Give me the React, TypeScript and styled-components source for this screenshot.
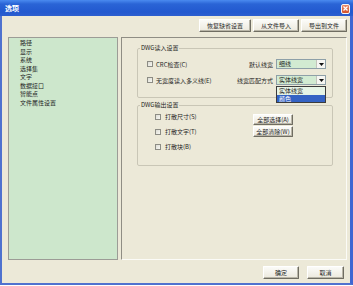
import React from "react";
import styled, { createGlobalStyle } from "styled-components";

const Global = createGlobalStyle`
  html, body { margin: 0; padding: 0; background: #ffffff; }
  body { font-family: "Noto Sans CJK SC", "Noto Sans", sans-serif; }
  * { box-sizing: border-box; }
`;

const Window = styled.div`
  width: 353px;
  height: 285px;
  display: flex;
  flex-direction: column;
  background: #ece9d8;
  border-left: 2px solid #4f72cf;
  border-right: 3px solid #3f66d2;
  border-bottom: 2px solid #4f72cf;
  font-family: "Noto Sans CJK SC", "Noto Sans", sans-serif;
  font-size: 6px;
  color: #1e1e1e;
`;

const TitleBar = styled.div`
  height: 16px;
  margin-left: -2px;
  margin-right: -3px;
  display: flex;
  align-items: center;
  justify-content: space-between;
  padding: 0 3px 0 5px;
  background: linear-gradient(#4a8af0 0%, #2a64d6 25%, #2259cf 75%, #2c5fcf 100%);
`;

const Title = styled.span`
  color: #ffffff;
  font-size: 7px;
  font-weight: bold;
  line-height: 16px;
`;

const CloseBtn = styled.div`
  width: 9px;
  height: 10px;
  margin-top: 1px;
  border: 1px solid #f4f4f4;
  border-radius: 2px;
  background: linear-gradient(#e88a6a, #d2512a);
  display: flex;
  align-items: center;
  justify-content: center;
`;

const Content = styled.div`
  flex: 1;
  display: flex;
  flex-direction: column;
  padding: 3px 3px 4px 6px;
`;

const Toolbar = styled.div`
  display: flex;
  justify-content: flex-end;
  gap: 2px;
  height: 13px;
  margin-bottom: 5px;
`;

const Button = styled.button<{ $w?: number; $h?: number }>`
  font-family: inherit;
  font-size: 6px;
  color: #1e1e1e;
  height: ${(p) => p.$h ?? 13}px;
  width: ${(p) => (p.$w ? `${p.$w}px` : "auto")};
  padding: 0 7px;
  margin: 0;
  line-height: 1;
  background: linear-gradient(#fbfbf8, #ece9dd);
  border: 1px solid;
  border-color: #ffffff #6f6d62 #6f6d62 #ffffff;
  box-shadow: inset -1px -1px 0 #b9b6a8;
  border-radius: 1px;
  display: flex;
  align-items: center;
  justify-content: center;
  white-space: nowrap;
`;

const Main = styled.div`
  flex: 1;
  display: flex;
  gap: 3px;
  min-height: 0;
`;

const ListPanel = styled.div`
  width: 110px;
  background: #cde7cc;
  border: 1px solid #9c9c96;
  padding: 1px 0 0 11px;
`;

const ListItem = styled.div`
  line-height: 8.5px;
  height: 8.5px;
  white-space: nowrap;
`;

const SettingsPanel = styled.div`
  flex: 1;
  border: 1px solid;
  border-color: #8f8d84 #fbfbf7 #fbfbf7 #8f8d84;
  padding: 6px 13px 0 15px;
  display: flex;
  flex-direction: column;
  gap: 3px;
`;

const Group = styled.fieldset`
  margin: 0;
  padding: 0;
  border: 1px solid #c9c6b6;
  border-radius: 2px;
  min-width: 0;
`;

const Legend = styled.legend`
  font-size: 6px;
  line-height: 8px;
  padding: 0 1px;
  margin-left: 2px;
  white-space: nowrap;
`;

const ReadGrid = styled.div`
  display: grid;
  grid-template-columns: 1fr auto 50px;
  grid-auto-rows: 10px;
  row-gap: 6px;
  column-gap: 3px;
  align-items: center;
  padding: 7px 6px 12px 9px;
`;

const CheckRow = styled.label<{ $gap?: number }>`
  display: flex;
  align-items: center;
  gap: ${(p) => p.$gap ?? 3}px;
  white-space: nowrap;
  line-height: 9px;
  height: 9px;
`;

const Box = styled.span`
  width: 6px;
  height: 6px;
  flex: none;
  border: 1px solid #8c8c84;
  background: linear-gradient(135deg, #dcdcd4, #f7f7f2);
`;

const FieldLabel = styled.span`
  justify-self: end;
  white-space: nowrap;
`;

const SelectBox = styled.div`
  position: relative;
  height: 10px;
  width: 50px;
  background: #d2ebd2;
  border: 1px solid #8ea0a8;
  display: flex;
  align-items: center;
  padding-left: 2px;
  white-space: nowrap;
`;

const SelectText = styled.span`
  flex: 1;
  line-height: 8px;
`;

const Arrow = styled.span`
  width: 9px;
  height: 8px;
  background: #f6f6f2;
  border-left: 1px solid #c4c4bc;
  display: flex;
  align-items: center;
  justify-content: center;
`;

const DropList = styled.div`
  position: absolute;
  left: -1px;
  top: 10px;
  width: 50px;
  border: 1px solid #3c3c3c;
  background: #e6f4e6;
  z-index: 2;
`;

const DropItem = styled.div<{ $active?: boolean }>`
  height: 7.5px;
  line-height: 7.5px;
  padding-left: 2px;
  overflow: hidden;
  background: ${(p) => (p.$active ? "#3463c4" : "transparent")};
  color: ${(p) => (p.$active ? "#ffffff" : "#1e1e1e")};
`;

const WriteBody = styled.div`
  display: flex;
  justify-content: space-between;
  padding: 0 39px 14px 17px;
`;

const CheckColumn = styled.div`
  display: flex;
  flex-direction: column;
  gap: 6px;
  padding-top: 3px;
`;

const ButtonColumn = styled.div`
  display: flex;
  flex-direction: column;
  gap: 1px;
  padding-top: 5px;
`;

const Footer = styled.div`
  display: flex;
  justify-content: flex-end;
  gap: 8px;
  margin-top: 6px;
  padding-right: 3px;
`;

const DownTri = () => (
  <svg width="5" height="3" viewBox="0 0 5 3">
    <path d="M0 0 H5 L2.5 3 Z" fill="#111" />
  </svg>
);

const items = ["路径", "显示", "系统", "选择集", "文字", "数据接口", "智能点", "文件属性设置"];

export default function App() {
  return (
    <>
      <Global />
      <Window>
        <TitleBar>
          <Title>选项</Title>
          <CloseBtn>
            <svg width="5" height="5" viewBox="0 0 5 5">
              <path d="M0.5 0.5 L4.5 4.5 M4.5 0.5 L0.5 4.5" stroke="#fff" strokeWidth="1.2" />
            </svg>
          </CloseBtn>
        </TitleBar>
        <Content>
          <Toolbar>
            <Button>恢复缺省设置</Button>
            <Button>从文件导入</Button>
            <Button>导出到文件</Button>
          </Toolbar>
          <Main>
            <ListPanel>
              {items.map((t) => (
                <ListItem key={t}>{t}</ListItem>
              ))}
            </ListPanel>
            <SettingsPanel>
              <Group>
                <Legend>DWG读入设置</Legend>
                <ReadGrid>
                  <CheckRow>
                    <Box />
                    CRC检查(C)
                  </CheckRow>
                  <FieldLabel>默认线宽</FieldLabel>
                  <SelectBox>
                    <SelectText>细线</SelectText>
                    <Arrow>
                      <DownTri />
                    </Arrow>
                  </SelectBox>
                  <CheckRow>
                    <Box />
                    无宽度读入多义线(E)
                  </CheckRow>
                  <FieldLabel>线宽匹配方式</FieldLabel>
                  <SelectBox>
                    <SelectText>实体线宽</SelectText>
                    <Arrow>
                      <DownTri />
                    </Arrow>
                    <DropList>
                      <DropItem>实体线宽</DropItem>
                      <DropItem $active>颜色</DropItem>
                    </DropList>
                  </SelectBox>
                </ReadGrid>
              </Group>
              <Group>
                <Legend>DWG输出设置</Legend>
                <WriteBody>
                  <CheckColumn>
                    <CheckRow $gap={4}>
                      <Box />
                      打散尺寸(S)
                    </CheckRow>
                    <CheckRow $gap={4}>
                      <Box />
                      打散文字(T)
                    </CheckRow>
                    <CheckRow $gap={4}>
                      <Box />
                      打散块(B)
                    </CheckRow>
                  </CheckColumn>
                  <ButtonColumn>
                    <Button $w={40} $h={11}>全部选择(A)</Button>
                    <Button $w={40} $h={11}>全部清除(W)</Button>
                  </ButtonColumn>
                </WriteBody>
              </Group>
            </SettingsPanel>
          </Main>
          <Footer>
            <Button $w={36}>确定</Button>
            <Button $w={37}>取消</Button>
          </Footer>
        </Content>
      </Window>
    </>
  );
}
